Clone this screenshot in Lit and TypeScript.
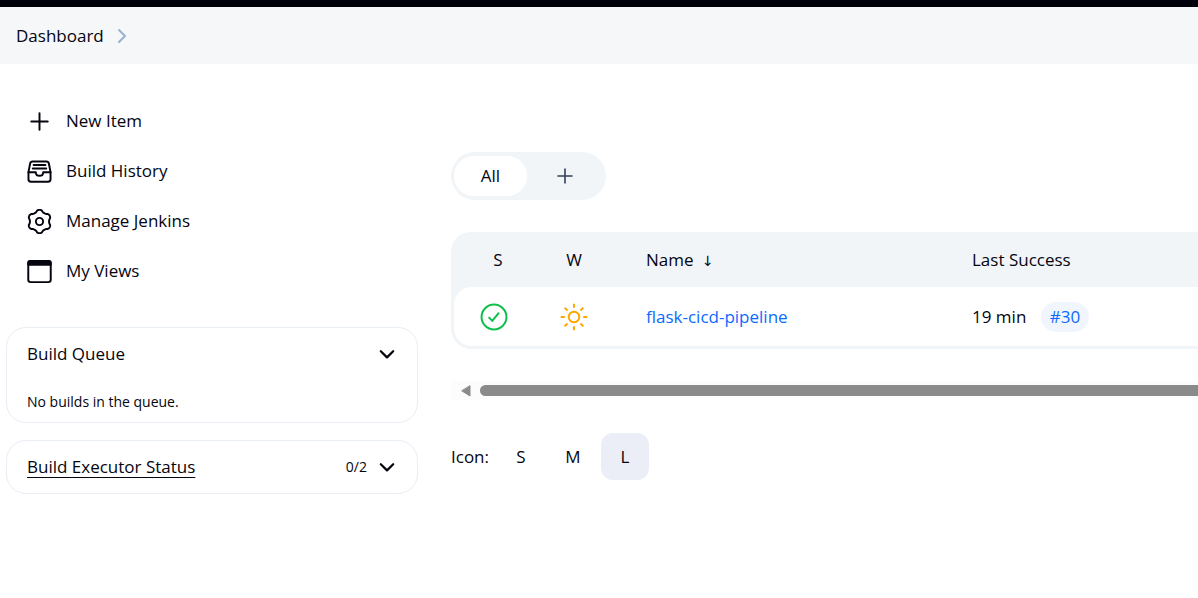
import { LitElement, html, css, svg } from "lit";
import { customElement } from "lit/decorators.js";

// Outline of a six-lobed cog centred in a 512 unit box, first lobe pointing up.
const cogOutline = (() => {
  const points: string[] = [];
  for (let deg = 0; deg < 360; deg += 3) {
    const wave = Math.cos((6 * deg * Math.PI) / 180);
    const radius = 218 + 22 * Math.sign(wave) * Math.pow(Math.abs(wave), 0.6);
    const angle = ((deg - 90) * Math.PI) / 180;
    points.push(`${(256 + radius * Math.cos(angle)).toFixed(1)} ${(256 + radius * Math.sin(angle)).toFixed(1)}`);
  }
  return `M${points.join("L")}Z`;
})();

const glyphs = {
  plus: svg`<path d="M256 88v336M88 256h336"/>`,
  tray: svg`<path d="M398 50H114c-28 0-44 14-50 42L30 270v146a50 50 0 0050 50h352a50 50 0 0050-50V270L448 92c-6-28-22-42-50-42z"/><path d="M30 270h150M332 270h150M180 270c0 100 152 100 152 0M136 122h240M118 196h276"/>`,
  gear: svg`<circle cx="256" cy="256" r="74"/><path d=${cogOutline}/>`,
  window: svg`<rect x="26" y="38" width="460" height="436" rx="48"/><path fill="currentColor" d="M438 38H74a48 48 0 00-48 48v34h460V86a48 48 0 00-48-48z"/>`,
};

const icon = (name: keyof typeof glyphs) =>
  html`<svg class="icon" viewBox="0 0 512 512" aria-hidden="true">${glyphs[name]}</svg>`;

const chevron = html`<svg class="chevron" viewBox="0 0 16 16" aria-hidden="true"><path d="M2.500 5.500l5.500 5.500 5.500-5.500"/></svg>`;

const tasks: { label: string; icon: keyof typeof glyphs }[] = [
  { label: "New Item", icon: "plus" },
  { label: "Build History", icon: "tray" },
  { label: "Manage Jenkins", icon: "gear" },
  { label: "My Views", icon: "window" },
];

@customElement("app-root")
export class AppRoot extends LitElement {
  static styles = css`
    :host {
      display: block;
      min-height: 100vh;
      overflow: hidden;
      background: #fff;
      color: #05050f;
      font: 17px/24px "Open Sans", "Noto Sans", sans-serif;
    }
    * { box-sizing: border-box; }
    a { color: inherit; text-decoration: none; }
    button {
      padding: 0;
      border: 0;
      background: none;
      color: inherit;
      font: inherit;
      cursor: pointer;
    }
    svg {
      display: block;
      flex: none;
      fill: none;
      stroke: currentColor;
      stroke-linecap: round;
      stroke-linejoin: round;
    }
    .topbar { height: 7px; background: #00000b; }
    .crumbs {
      display: flex;
      align-items: center;
      gap: 13px;
      height: 57px;
      padding: 0 16px;
      background: #f5f7f9;
    }
    .crumb-arrow { width: 12px; height: 16px; color: #9bb0cd; stroke-width: 2; }
    .page { display: flex; gap: 33px; padding-left: 6px; }
    .side { flex: none; width: 412px; padding-top: 32px; }
    .tasks { margin-bottom: 31px; }
    .task {
      display: flex;
      align-items: center;
      gap: 14px;
      height: 50px;
      padding-left: 21px;
    }
    .icon { width: 25px; height: 25px; stroke-width: 40; }
    .card {
      margin-bottom: 17px;
      padding: 0 20px;
      border: 1px solid #e9edf4;
      border-radius: 20px;
    }
    .card-head { display: flex; align-items: center; height: 52px; gap: 10px; }
    .card-title { flex: 1; margin: 0; font: inherit; }
    .underlined { text-decoration: underline; text-underline-offset: 4px; text-decoration-thickness: 1px; }
    .small { font-size: 14px; }
    .card-body { margin: 0; padding: 10px 0 8px; }
    .chevron { width: 20px; height: 18px; stroke-width: 2; }
    .main { flex: 1; min-width: 0; padding-top: 88px; }
    .tabs {
      display: inline-flex;
      vertical-align: top;
      height: 48px;
      padding: 4px 3px;
      border-radius: 24px;
      background: #f1f5f8;
    }
    .tab { display: grid; place-items: center; width: 73px; border-radius: 20px; }
    .tab.on { background: #fff; }
    .tab.add { width: 76px; color: #32405c; }
    .tab-plus { width: 16px; height: 16px; stroke-width: 1.6; }
    .scroller { margin-top: 32px; overflow: hidden; }
    .jobs {
      width: 1120px;
      padding: 0 3px 3px;
      border-radius: 20px;
      background: #f1f5f8;
      border-spacing: 0;
      table-layout: fixed;
    }
    .jobs th { height: 55px; padding: 0; font-weight: 400; text-align: left; }
    .jobs td { height: 59px; padding: 0; background: #fff; }
    .jobs td:first-child { border-radius: 18px 0 0 18px; }
    .jobs td:last-child { border-radius: 0 18px 18px 0; }
    .jobs .state { width: 80px; }
    .jobs .weather { width: 112px; padding-right: 32px; }
    .jobs .name { width: 326px; }
    .jobs th.state, .jobs th.weather { text-align: center; }
    .jobs th.state { padding-left: 8px; }
    .sort { margin-left: 4px; font-family: "DejaVu Sans", sans-serif; font-size: 14px; line-height: 1; }
    .state svg, .weather svg { width: 28px; height: 28px; margin: 0 auto; stroke-width: 36; }
    .ok { color: #0cbf4b; }
    .sun { color: #fda800; stroke-linecap: butt; }
    .link { color: #0b6aff; }
    .build {
      display: inline-block;
      margin-left: 10px;
      padding: 3px 9px;
      border-radius: 15px;
      background: #f1f6fe;
    }
    .track {
      display: flex;
      align-items: center;
      gap: 9px;
      height: 19px;
      margin-top: 32px;
      padding-left: 10px;
      background: #fcfcfc;
    }
    .track-arrow { width: 10px; height: 12px; fill: #8a8a8a; stroke: #8a8a8a; }
    .thumb { flex: 1; height: 11px; border-radius: 6px 0 0 6px; background: #8a8a8a; }
    .sizes { display: flex; align-items: center; gap: 4px; margin-top: 33px; }
    .sizes-label { margin-right: 4px; }
    .size { width: 48px; height: 47px; border-radius: 12px; }
    .size.on { background: #ebeef7; }
  `;

  render() {
    return html`
      <header>
        <div class="topbar"></div>
        <nav class="crumbs" aria-label="Breadcrumbs">
          <a href="#">Dashboard</a>
          <svg class="crumb-arrow" viewBox="0 0 12 16" aria-hidden="true"><path d="M2 2l6 6-6 6"/></svg>
        </nav>
      </header>
      <div class="page">
        <aside class="side">
          <nav class="tasks">
            ${tasks.map((t) => html`<a class="task" href="#">${icon(t.icon)}<span>${t.label}</span></a>`)}
          </nav>
          <section class="card">
            <div class="card-head">
              <h2 class="card-title">Build Queue</h2>
              <button aria-label="Collapse build queue">${chevron}</button>
            </div>
            <p class="card-body small">No builds in the queue.</p>
          </section>
          <section class="card">
            <div class="card-head">
              <h2 class="card-title"><a class="underlined" href="#">Build Executor Status</a></h2>
              <span class="small">0/2</span>
              <button aria-label="Expand executor status">${chevron}</button>
            </div>
          </section>
        </aside>
        <main class="main">
          <nav class="tabs">
            <a class="tab on" href="#">All</a>
            <a class="tab add" href="#" aria-label="New view">
              <svg class="tab-plus" viewBox="0 0 16 16"><path d="M8 1v14M1 8h14"/></svg>
            </a>
          </nav>
          <div class="scroller">
            <table class="jobs">
              <thead>
                <tr>
                  <th class="state">S</th>
                  <th class="weather">W</th>
                  <th class="name">Name <span class="sort">↓</span></th>
                  <th>Last Success</th>
                </tr>
              </thead>
              <tbody>
                <tr>
                  <td class="state">
                    <svg class="ok" viewBox="0 0 512 512" role="img" aria-label="Success">
                      <circle cx="256" cy="256" r="228"/><path d="M168 268l56 60 116-142"/>
                    </svg>
                  </td>
                  <td class="weather">
                    <svg class="sun" viewBox="0 0 512 512" role="img" aria-label="Stable">
                      <circle cx="256" cy="256" r="96"/>
                      <path d="M256 12v76M256 424v76M12 256h76M424 256h76M84 84l54 54M374 374l54 54M84 428l54-54M374 138l54-54"/>
                    </svg>
                  </td>
                  <td><a class="link" href="#">flask-cicd-pipeline</a></td>
                  <td>19 min <a class="link build" href="#">#30</a></td>
                </tr>
              </tbody>
            </table>
          </div>
          <div class="track" aria-hidden="true">
            <svg class="track-arrow" viewBox="0 0 10 12"><path d="M9 1v10L1 6z"/></svg>
            <div class="thumb"></div>
          </div>
          <div class="sizes">
            <span class="sizes-label">Icon:</span>
            <button class="size">S</button>
            <button class="size">M</button>
            <button class="size on">L</button>
          </div>
        </main>
      </div>
    `;
  }
}
